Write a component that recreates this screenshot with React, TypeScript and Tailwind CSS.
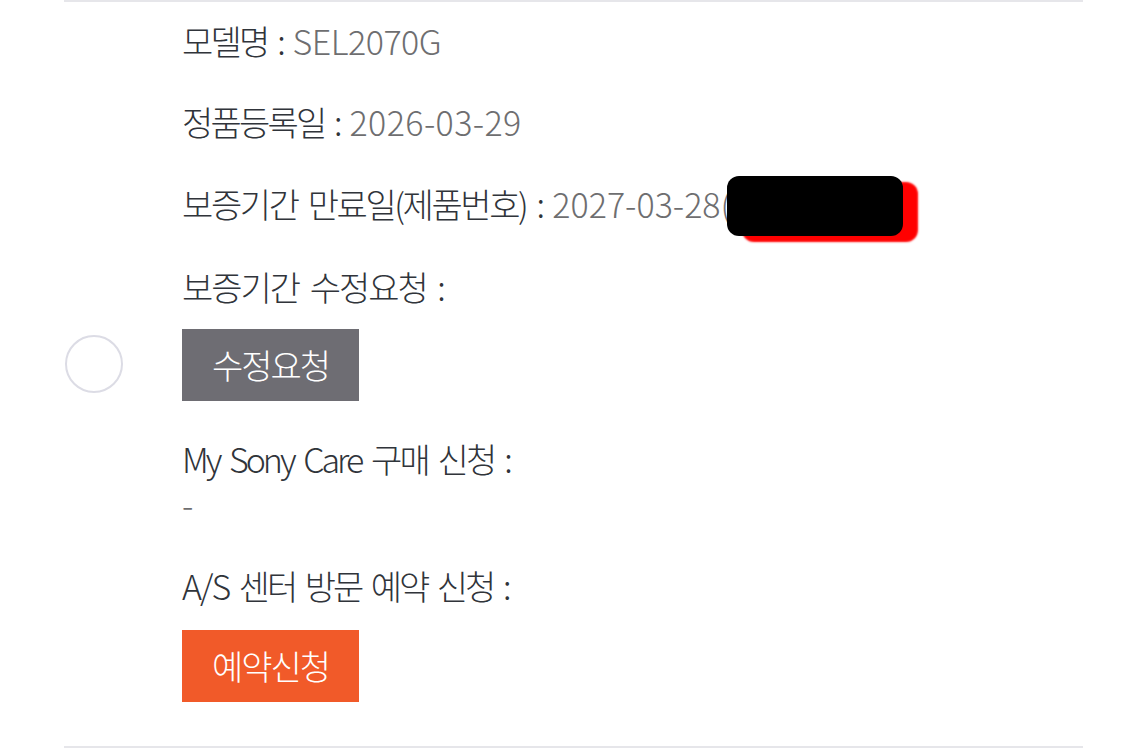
import React from "react";

const font = {
  fontFamily: '"Noto Sans CJK KR", "Noto Sans", sans-serif',
};

export default function App() {
  return (
    <div className="w-[1148px] h-[750px] bg-white overflow-hidden" style={font}>
      <div className="ml-[64px] w-[1019px] border-t-2 border-b-2 border-[#e6e6ea] flex items-center">
        <div className="w-[118px] flex justify-start mb-[20px]">
          <div className="ml-[1px] w-[58px] h-[58px] rounded-full border-2 border-[#dcdce5] bg-white" />
        </div>
        <div className="flex flex-col pt-[19px] pb-[44px] text-[34px] tracking-[-2.8px] [word-spacing:5px] font-light text-[#30343a]">
          <div className="leading-[40px] whitespace-nowrap">
            모델명 : <span className="text-[#6e6e70] tracking-[-0.5px]">SEL2070G</span>
          </div>
          <div className="leading-[40px] mt-[41px] whitespace-nowrap">
            정품등록일 : <span className="text-[#6e6e70] tracking-[0.4px]">2026-03-29</span>
          </div>
          <div className="leading-[40px] mt-[42px] whitespace-nowrap">
            <span className="tracking-[-2.4px]">보증기간 만료일(제품번호) :</span>{" "}
            <span className="relative text-[#6e6e70] tracking-[0px]">
              2027-03-28(
              <span className="absolute left-[100%] -ml-[4px] top-[-3px] w-[176px] h-[60px] bg-black rounded-[12px] shadow-[15px_6px_2px_#ff0000]" />
            </span>
          </div>
          <div className="leading-[40px] mt-[43px] whitespace-nowrap tracking-[-2px]">보증기간 수정요청 :</div>
          <div className="mt-[22px]">
            <button className="w-[177px] h-[72px] bg-[#6e6d73] text-white text-[34px] leading-[72px] tracking-[-2px]">
              수정요청
            </button>
          </div>
          <div className="leading-[40px] mt-[38px] whitespace-nowrap">
            <span className="tracking-[-3px]">My Sony Care</span> 구매 신청 :
          </div>
          <div className="leading-[30px] mt-[10px] text-[#6e6e70]">-</div>
          <div className="leading-[40px] mt-[47px] whitespace-nowrap tracking-[-3px]">
            <span className="tracking-[-2px]">A/S</span> 센터 방문 예약 신청 :
          </div>
          <div className="mt-[24px]">
            <button className="w-[177px] h-[72px] bg-[#f15a29] text-white text-[34px] leading-[72px] tracking-[-2px]">
              예약신청
            </button>
          </div>
        </div>
      </div>
    </div>
  );
}
